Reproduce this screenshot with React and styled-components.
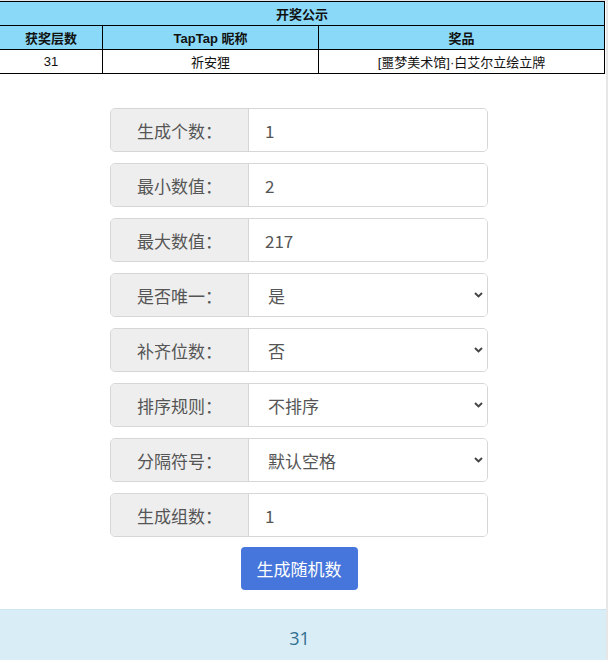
import styled, { createGlobalStyle } from "styled-components";

const GlobalStyle = createGlobalStyle`
  body {
    margin: 0;
    background: #fff;
    font-family: "Liberation Sans", "Noto Sans CJK SC", sans-serif;
  }
`;

const Page = styled.div`
  width: 606px;
  border-right: 2px solid #e6e6e6;
  border-top: 1px solid #e6e6e6;
`;

const PrizeTable = styled.table`
  width: 606px;
  margin-left: -1px;
  border-collapse: collapse;
  font-size: 13px;
  color: #111;
`;

const Cell = styled.td`
  border: 1px solid #000;
  height: 23px;
  padding: 0;
  text-align: center;
  background: ${(p) => (p.$head ? "#8ad9f8" : "#fff")};
  font-weight: ${(p) => (p.$head ? "bold" : "normal")};
`;

const Generator = styled.div`
  width: 598px;
  display: flex;
  flex-direction: column;
  align-items: center;
  gap: 11px;
  padding: 34px 0 19px;
`;

const Field = styled.div`
  display: flex;
  width: 378px;
  height: 44px;
  box-sizing: border-box;
  border: 1px solid #d6d6d6;
  border-radius: 5px;
  overflow: hidden;
  font-family: "Noto Sans CJK SC", "Liberation Sans", sans-serif;
  font-size: 17px;
  color: #555;
`;

const Label = styled.span`
  width: 137px;
  flex: none;
  display: flex;
  align-items: center;
  justify-content: center;
  background: #eee;
  border-right: 1px solid #d6d6d6;
`;

const Input = styled.input`
  flex: 1;
  min-width: 0;
  border: none;
  outline: none;
  padding: 0 16px;
  font: inherit;
  color: #555;
  background: #fff;
`;

const SelectWrap = styled.div`
  flex: 1;
  position: relative;
  display: flex;
`;

const Select = styled.select`
  flex: 1;
  appearance: none;
  border: none;
  outline: none;
  padding: 0 19px;
  font: inherit;
  color: #555;
  background: #fff;
`;

const Chevron = styled.svg`
  position: absolute;
  right: 4px;
  top: 50%;
  margin-top: -3px;
  pointer-events: none;
`;

const Button = styled.button`
  margin-top: -1px;
  height: 43px;
  padding: 0 16px;
  border: none;
  border-radius: 4px;
  background: #4676db;
  color: #fff;
  font-family: "Noto Sans CJK SC", "Liberation Sans", sans-serif;
  font-size: 17px;
`;

const Result = styled.div`
  height: 56px;
  display: flex;
  align-items: center;
  justify-content: center;
  padding-right: 7px;
  background: #d9edf7;
  border-top: 1px solid #cbe6f1;
  color: #31708f;
  font-family: "Open Sans", "Liberation Sans", sans-serif;
  font-size: 18px;
`;

const inputs = [
  ["生成个数：", "1"],
  ["最小数值：", "2"],
  ["最大数值：", "217"],
];

const selects = [
  ["是否唯一：", "是"],
  ["补齐位数：", "否"],
  ["排序规则：", "不排序"],
  ["分隔符号：", "默认空格"],
];

const ArrowDown = () => (
  <Chevron width="9" height="6" viewBox="0 0 9 6">
    <polyline points="1,1 4.5,4.5 8,1" fill="none" stroke="#444" strokeWidth="1.9" />
  </Chevron>
);

export default function App() {
  return (
    <Page>
      <GlobalStyle />
      <PrizeTable>
        <tbody>
          <tr>
            <Cell $head colSpan={3}>开奖公示</Cell>
          </tr>
          <tr>
            <Cell $head style={{ width: 102 }}>获奖层数</Cell>
            <Cell $head style={{ width: 215 }}>TapTap 昵称</Cell>
            <Cell $head>奖品</Cell>
          </tr>
          <tr>
            <Cell>31</Cell>
            <Cell>祈安狸</Cell>
            <Cell>[噩梦美术馆]·白艾尔立绘立牌</Cell>
          </tr>
        </tbody>
      </PrizeTable>

      <Generator>
        {inputs.map(([label, value]) => (
          <Field key={label}>
            <Label>{label}</Label>
            <Input defaultValue={value} />
          </Field>
        ))}
        {selects.map(([label, value]) => (
          <Field key={label}>
            <Label>{label}</Label>
            <SelectWrap>
              <Select defaultValue={value}>
                <option>{value}</option>
              </Select>
              <ArrowDown />
            </SelectWrap>
          </Field>
        ))}
        <Field>
          <Label>生成组数：</Label>
          <Input defaultValue="1" />
        </Field>
        <Button>生成随机数</Button>
      </Generator>

      <Result>31</Result>
    </Page>
  );
}
